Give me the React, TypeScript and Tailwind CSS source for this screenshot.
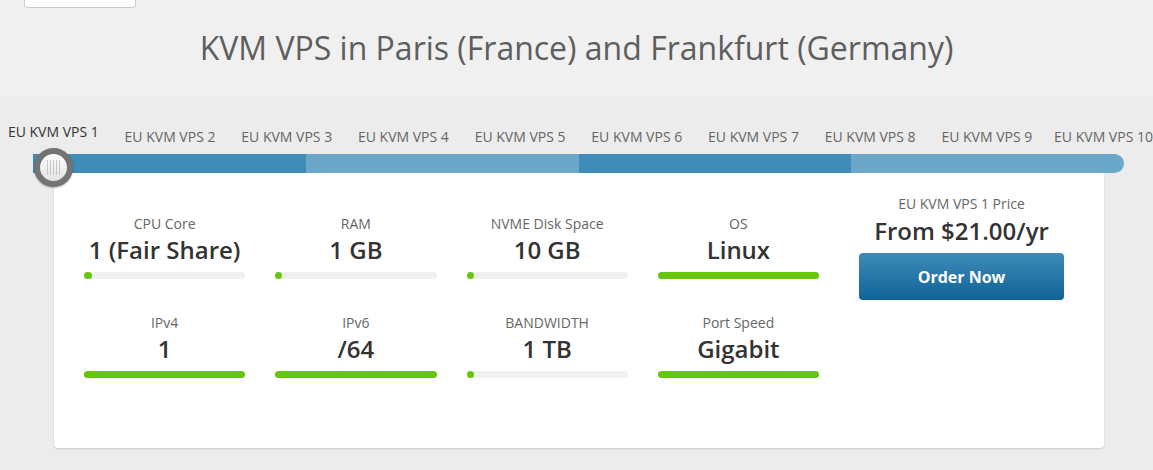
const plans = [
  "EU KVM VPS 1",
  "EU KVM VPS 2",
  "EU KVM VPS 3",
  "EU KVM VPS 4",
  "EU KVM VPS 5",
  "EU KVM VPS 6",
  "EU KVM VPS 7",
  "EU KVM VPS 8",
  "EU KVM VPS 9",
  "EU KVM VPS 10",
];

const specs = [
  { label: "CPU Core", value: "1 (Fair Share)", pct: 5 },
  { label: "RAM", value: "1 GB", pct: 3 },
  { label: "NVME Disk Space", value: "10 GB", pct: 3 },
  { label: "OS", value: "Linux", pct: 100 },
  { label: "IPv4", value: "1", pct: 100 },
  { label: "IPv6", value: "/64", pct: 100 },
  { label: "BANDWIDTH", value: "1 TB", pct: 3 },
  { label: "Port Speed", value: "Gigabit", pct: 100 },
];

const Spec = ({ label, value, pct }: { label: string; value: string; pct: number }) => (
  <div className="flex flex-col items-center px-[15px]">
    <span className="text-[14px] leading-[18px] text-[#666]">{label}</span>
    <span className="mt-[2px] text-[24px] leading-[30px] font-semibold text-[#333]">{value}</span>
    <div className="mt-[7px] h-[7px] w-full rounded-full bg-[#f0f0f0]">
      <div className="h-full min-w-[7px] rounded-full bg-[#66c60c]" style={{ width: `${pct}%` }} />
    </div>
  </div>
);

export default function App() {
  return (
    <div className="min-h-[470px] overflow-hidden bg-[#ececec] font-['Open_Sans',sans-serif]">
      <div className="h-[96px] bg-[#f0f0f0]">
        <div className="ml-[24px] h-[8px] w-[112px] rounded-b-[4px] border border-t-0 border-[#ccc] bg-white" />
        <h1 className="mt-[21px] text-center text-[32px] leading-[38px] text-[#5e5e5e]">
          KVM VPS in Paris (France) and Frankfurt (Germany)
        </h1>
      </div>

      <div className="relative">
        <div className="ml-[-5px] flex h-[58px] items-end pb-[8px]">
          {plans.map((p, i) => (
            <span
              key={p}
              className={`w-[116.7px] shrink-0 whitespace-nowrap text-center text-[14px] leading-[18px] ${
                i === 0 ? "mb-[5px] text-[#333]" : "text-[#666]"
              }`}
            >
              {p}
            </span>
          ))}
        </div>

        <div className="ml-[33px] flex h-[19px] w-[1091px] overflow-hidden rounded-r-full">
          <div className="flex-1 bg-[#3f8cb9]" />
          <div className="flex-1 bg-[#6aa7c9]" />
          <div className="flex-1 bg-[#3f8cb9]" />
          <div className="flex-1 bg-[#6aa7c9]" />
        </div>

        <div className="absolute left-[34px] top-[52px] z-10 flex h-[39px] w-[39px] items-center justify-center rounded-full bg-[#737373] shadow-[0_1px_2px_rgba(0,0,0,0.3)]">
          <div className="flex h-[27px] w-[27px] items-center justify-center gap-[2px] rounded-full bg-gradient-to-b from-[#fdfdfd] to-[#e2e2e2]">
            {[0, 1, 2, 3, 4].map((k) => (
              <span key={k} className="h-[15px] w-[1px] bg-[#c8c8c8]" />
            ))}
          </div>
        </div>

        <div className="mx-[54px] flex h-[275px] w-[1050px] items-start rounded-b-[4px] bg-white px-[15px] shadow-[0_1px_2px_rgba(0,0,0,0.15)]">
          <div className="grid w-[765px] grid-cols-4 content-start gap-y-[35px] pt-[42px]">
            {specs.map((s) => (
              <Spec key={s.label} {...s} />
            ))}
          </div>
          <div className="flex flex-1 flex-col items-center pt-[22px]">
            <span className="text-[14px] leading-[18px] text-[#666]">EU KVM VPS 1 Price</span>
            <span className="mt-[3px] text-[24px] leading-[30px] font-semibold text-[#333]">From $21.00/yr</span>
            <button className="mt-[7px] h-[47px] w-[205px] rounded-[4px] bg-gradient-to-b from-[#3d8bb8] to-[#0c6397] text-[16px] font-bold text-white">
              Order Now
            </button>
          </div>
        </div>
      </div>
    </div>
  );
}
